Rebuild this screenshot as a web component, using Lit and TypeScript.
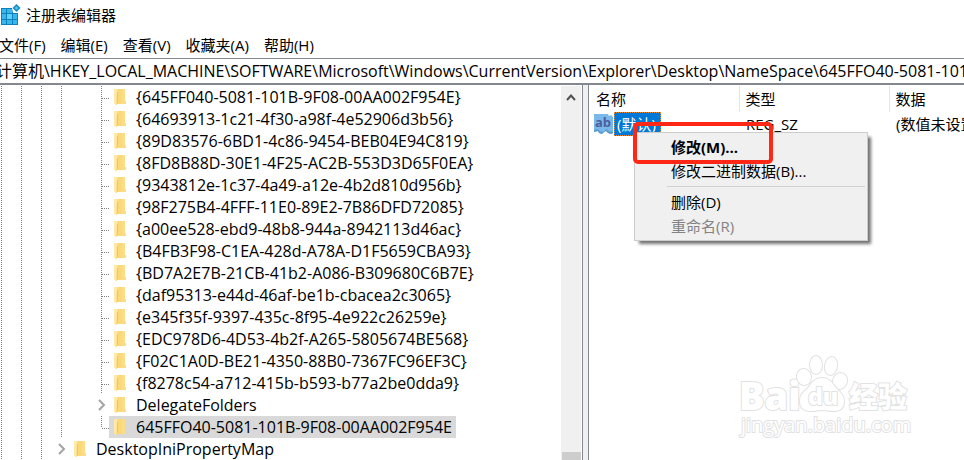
import { LitElement, html, css, svg } from "lit";
import { customElement } from "lit/decorators.js";
import { classMap } from "lit/directives/class-map.js";

interface TreeNode {
  name: string;
  depth: number;
  expandable?: boolean;
  selected?: boolean;
  last?: boolean;
}

const KEYS = [
  "{645FF040-5081-101B-9F08-00AA002F954E}",
  "{64693913-1c21-4f30-a98f-4e52906d3b56}",
  "{89D83576-6BD1-4c86-9454-BEB04E94C819}",
  "{8FD8B88D-30E1-4F25-AC2B-553D3D65F0EA}",
  "{9343812e-1c37-4a49-a12e-4b2d810d956b}",
  "{98F275B4-4FFF-11E0-89E2-7B86DFD72085}",
  "{a00ee528-ebd9-48b8-944a-8942113d46ac}",
  "{B4FB3F98-C1EA-428d-A78A-D1F5659CBA93}",
  "{BD7A2E7B-21CB-41b2-A086-B309680C6B7E}",
  "{daf95313-e44d-46af-be1b-cbacea2c3065}",
  "{e345f35f-9397-435c-8f95-4e922c26259e}",
  "{EDC978D6-4D53-4b2f-A265-5805674BE568}",
  "{F02C1A0D-BE21-4350-88B0-7367FC96EF3C}",
  "{f8278c54-a712-415b-b593-b77a2be0dda9}",
];

const NODES: TreeNode[] = [
  ...KEYS.map((name) => ({ name, depth: 5 })),
  { name: "DelegateFolders", depth: 5, expandable: true },
  { name: "645FFO40-5081-101B-9F08-00AA002F954E", depth: 5, selected: true, last: true },
  { name: "DesktopIniPropertyMap", depth: 3, expandable: true },
];

const PATH =
  "计算机\\HKEY_LOCAL_MACHINE\\SOFTWARE\\Microsoft\\Windows\\CurrentVersion\\Explorer\\Desktop\\NameSpace\\645FFO40-5081-101B-9F08-00AA002F954E";

const folder = html`<svg class="folder" width="14" height="18" viewBox="0 0 14 18" aria-hidden="true">
  <path d="M4 1h8v12h1v3H4z" fill="#fbd978" />
  <path d="M9 1h3v12h1v3H9z" fill="#fadf8c" opacity=".6" />
  <path d="M1 1h3.500l.5 12-1.500 4.500L1 15.500z" fill="#ffe9a8" />
  <path d="M4 3.500l1 .5v10l-1.500 3.500z" fill="#efc65c" />
</svg>`;

const chevron = html`<svg class="chevron" width="10" height="14" viewBox="0 0 10 14" aria-hidden="true">
  <path d="M2 2l5 5-5 5" fill="none" stroke="#a3a3a3" stroke-width="2" />
</svg>`;

@customElement("registry-tree")
export class RegistryTree extends LitElement {
  static styles = css`
    :host {
      display: flex;
      min-width: 0;
      min-height: 0;
      background: #fff;
      border-right: 1px solid #828790;
      overflow: hidden;
      font-size: 16px;
    }
    .tree {
      flex: 1;
      min-width: 0;
      margin: 0;
      padding: 1px 0 0;
      list-style: none;
      overflow: hidden;
    }
    .row {
      display: flex;
      height: 22px;
      align-items: center;
      white-space: nowrap;
    }
    .guide {
      flex: none;
      width: 20px;
      height: 22px;
    }
    .guide.line {
      background: repeating-linear-gradient(#808080 0 1px, transparent 1px 2px) 1px 0 / 1px 100% no-repeat;
    }
    .joint {
      flex: none;
      display: flex;
      align-items: center;
      width: 9px;
      height: 22px;
      background:
        repeating-linear-gradient(#808080 0 1px, transparent 1px 2px) 1px 0 / 1px 100% no-repeat,
        repeating-linear-gradient(90deg, transparent 0 1px, #808080 1px 2px) 1px 12px / 8px 1px no-repeat;
    }
    .joint.last {
      background:
        repeating-linear-gradient(#808080 0 1px, transparent 1px 2px) 1px 0 / 1px 12px no-repeat,
        repeating-linear-gradient(90deg, transparent 0 1px, #808080 1px 2px) 1px 12px / 8px 1px no-repeat;
    }
    .joint.expandable {
      background: none;
    }
    .chevron {
      flex: none;
      margin-left: -3px;
    }
    .item {
      display: flex;
      align-items: center;
      height: 22px;
      padding: 0 4px;
    }
    .item.selected {
      background: #d9d9d9;
    }
    .folder {
      flex: none;
      margin-right: 9px;
    }
    .scroll {
      flex: none;
      display: flex;
      flex-direction: column;
      align-items: center;
      justify-content: space-between;
      width: 20px;
      margin: 1px 1px 0 0;
      background: #f0f0f0;
    }
    .up {
      display: flex;
      justify-content: center;
      width: 20px;
      padding: 5px 0 0;
      border: 0;
      background: none;
    }
    .thumb {
      width: 19px;
      height: 8px;
      background: #cdcdcd;
    }
  `;

  private row(n: TreeNode) {
    const guides = Array.from({ length: n.depth }, (_, i) => i);
    return html`<li class="row" role="treeitem" aria-selected=${n.selected ? "true" : "false"}>
      ${guides.map((i) => html`<span class=${classMap({ guide: true, line: i < 4 })}></span>`)}
      <span class=${classMap({ joint: true, last: !!n.last, expandable: !!n.expandable })}
        >${n.expandable ? chevron : ""}</span
      >
      <span class=${classMap({ item: true, selected: !!n.selected })}>${folder}<span>${n.name}</span></span>
    </li>`;
  }

  render() {
    return html`
      <ul class="tree" role="tree">
        ${NODES.map((n) => this.row(n))}
      </ul>
      <div class="scroll">
        <button class="up" aria-label="Scroll up">
          <svg width="12" height="12" viewBox="0 0 12 12">
            <path d="M2 9l4-4.500L10 9" fill="none" stroke="#505050" stroke-width="2" />
          </svg>
        </button>
        <div class="thumb"></div>
      </div>
    `;
  }
}

@customElement("value-list")
export class ValueList extends LitElement {
  static styles = css`
    :host {
      display: block;
      position: relative;
      min-width: 0;
      background: #fff;
      border-left: 1px solid #828790;
      padding-top: 1px;
    }
    .clip {
      overflow: hidden;
    }
    .values {
      width: 100%;
      border-collapse: collapse;
      table-layout: fixed;
      white-space: nowrap;
    }
    .col {
      width: 150px;
    }
    th {
      height: 26px;
      padding: 0 0 0 6px;
      border-right: 1px solid #e5e5e5;
      font-weight: 400;
      text-align: left;
      box-sizing: border-box;
    }
    th:last-child {
      border-right: 0;
    }
    th:first-child {
      padding-left: 7px;
    }
    td {
      height: 24px;
      padding: 0 0 0 7px;
    }
    .name {
      padding-left: 5px;
    }
    .entry {
      display: flex;
      align-items: center;
    }
    .label {
      height: 24px;
      line-height: 24px;
      padding: 0 5px 0 3px;
      box-sizing: border-box;
      background: #0078d7;
      color: #fff;
      outline: 1px dotted #e08a3c;
      outline-offset: -1px;
    }
    .menu {
      position: absolute;
      left: 45px;
      top: 47px;
      width: 234px;
      box-sizing: border-box;
      padding: 2px;
      border: 1px solid #ccc;
      background: #f0f0f0;
      box-shadow: 4px 4px 3px -1px rgba(0, 0, 0, 0.55);
    }
    .cmd {
      display: block;
      width: 100%;
      height: 24px;
      padding: 0 0 0 34px;
      border: 0;
      background: none;
      color: #000;
      font: inherit;
      text-align: left;
      white-space: nowrap;
    }
    .cmd.default {
      font-weight: 700;
    }
    .cmd:disabled {
      color: #838383;
    }
    .sep {
      height: 1px;
      margin: 3px 0 3px 30px;
      border: 0;
      background: #d2d2d2;
    }
    .mark {
      position: absolute;
      left: 44px;
      top: 37px;
      width: 140px;
      height: 42px;
      box-sizing: border-box;
      border: 4px solid #ff2716;
      border-radius: 5px;
      pointer-events: none;
    }
    .ab {
      font: 700 13px/1 "Open Sans", sans-serif;
    }
  `;

  render() {
    return html`
      <div class="clip">
        <table class="values">
          <colgroup>
            <col class="col" />
            <col class="col" />
            <col />
          </colgroup>
          <thead>
            <tr>
              <th>名称</th>
              <th>类型</th>
              <th>数据</th>
            </tr>
          </thead>
          <tbody>
            <tr>
              <td class="name">
                <span class="entry">
                  <svg width="20" height="20" viewBox="0 0 20 20" aria-hidden="true">
                    <path
                      d="M0 0h14l1 2 2-1 2 2v16l-2 1-3-1-2-2-2 1-2 2-3-1-1-2-4 1z"
                      fill="#7ab8ea"
                    />
                    <path d="M0 16l4-1 2 2 3 1 2-2 2-1 2 2 4 1v1l-2 1-3-1-2-2-2 1-2 2-3-1-1-2-4 1z" fill="#5d9dd0" />
                    <text x="1" y="13" class="ab" fill="#4c5f9c">ab</text>
                  </svg>
                  <span class="label">(默认)</span>
                </span>
              </td>
              <td>REG_SZ</td>
              <td>(数值未设置)</td>
            </tr>
          </tbody>
        </table>
      </div>
      <div class="menu" role="menu">
        <button class="cmd default" role="menuitem">修改(M)...</button>
        <button class="cmd" role="menuitem">修改二进制数据(B)...</button>
        <hr class="sep" />
        <button class="cmd" role="menuitem">删除(D)</button>
        <button class="cmd" role="menuitem" disabled>重命名(R)</button>
      </div>
      <div class="mark"></div>
    `;
  }
}

@customElement("baidu-watermark")
export class BaiduWatermark extends LitElement {
  static styles = css`
    :host {
      display: block;
      pointer-events: none;
    }
    .art {
      display: block;
      overflow: visible;
    }
    .ink {
      fill: #fff;
      stroke: #e2e2e2;
      stroke-width: 2px;
      paint-order: stroke;
    }
    .bold {
      font-family: "Open Sans", "Noto Sans CJK SC", sans-serif;
      font-weight: 800;
    }
    .url {
      font-family: "Open Sans", sans-serif;
      font-size: 20px;
    }
  `;

  render() {
    const toes = [
      [65, 21, 7, 8, -8],
      [77, 9, 6, 9, 0],
      [92, 10, 6, 9, 10],
      [101, 25, 7, 8, 20],
    ];
    return html`<svg class="art" width="176" height="84" viewBox="0 0 176 84">
      <text class="ink bold" x="0" y="54" font-size="38">Bai</text>
      ${toes.map(
        ([x, y, rx, ry, a]) =>
          svg`<ellipse class="ink" cx=${x} cy=${y} rx=${rx} ry=${ry} transform="rotate(${a} ${x} ${y})" />`
      )}
      <path
        class="ink"
        d="M83 22c-8 0-10 5-14 10-4 4-8 6-8 13 0 8 5 10 11 10 5 0 7-1 11-1s7 1 12 1c6 0 10-3 10-10 0-6-4-9-8-13-4-5-6-10-14-10z"
      />
      <text class="ink bold" x="69" y="49" font-size="23">du</text>
      <text class="ink bold" x="110" y="52" font-size="29">经验</text>
      <text class="ink url" x="2" y="76">jingyan.baidu.com</text>
    </svg>`;
  }
}

@customElement("app-root")
export class AppRoot extends LitElement {
  static styles = css`
    :host {
      display: flex;
      flex-direction: column;
      position: relative;
      height: 100vh;
      overflow: hidden;
      background: #fff;
      color: #000;
      font: 15px/22px "Open Sans", "Noto Sans CJK SC", sans-serif;
    }
    .title {
      display: flex;
      align-items: center;
      height: 30px;
      gap: 5px;
      padding-left: 1px;
    }
    .menubar {
      display: flex;
      align-items: center;
      gap: 15px;
      height: 28px;
      margin-left: -1px;
      padding-top: 2px;
      box-sizing: border-box;
    }
    .top {
      padding: 0;
      border: 0;
      background: none;
      color: inherit;
      font: inherit;
      white-space: nowrap;
    }
    .address {
      flex: none;
      width: 100%;
      height: 27px;
      box-sizing: border-box;
      padding: 0 0 2px;
      border: solid #828790;
      border-width: 1px 0 2px;
      background: #fff;
      color: inherit;
      font: inherit;
      font-size: 16px;
      text-indent: -4px;
      outline: 0;
    }
    .split {
      flex: 1;
      display: grid;
      grid-template-columns: 583fr 5px 376fr;
      grid-template-rows: minmax(0, 1fr);
      min-height: 0;
      background: #f0f0f0;
    }
    .watermark {
      position: absolute;
      right: 49px;
      bottom: 20px;
    }
  `;

  render() {
    return html`
      <header class="title">
        <svg width="20" height="22" viewBox="0 0 20 22" aria-hidden="true">
          <rect x="0" y="4" width="17" height="17" fill="#0e80bd" />
          <g fill="#37b7ec">
            <rect x="1" y="5" width="4" height="4" />
            <rect x="6" y="5" width="5" height="4" />
            <rect x="1" y="10" width="4" height="5" />
            <rect x="6" y="10" width="5" height="5" fill="#5fd0f7" />
            <rect x="12" y="10" width="4" height="5" />
            <rect x="1" y="16" width="4" height="4" />
            <rect x="6" y="16" width="5" height="4" />
            <rect x="12" y="16" width="4" height="4" />
          </g>
          <path d="M11 4h6v5h-5z" fill="#fff" />
          <path d="M15.500 0l4 4-4 4-4-4z" fill="#1588c4" />
          <path d="M15.500 2l2 2-2 2-2-2z" fill="#4cc3f1" />
        </svg>
        <span>注册表编辑器</span>
      </header>
      <nav class="menubar">
        ${["文件(F)", "编辑(E)", "查看(V)", "收藏夹(A)", "帮助(H)"].map(
          (t) => html`<button class="top">${t}</button>`
        )}
      </nav>
      <input class="address" aria-label="Address" .value=${PATH} />
      <main class="split">
        <registry-tree></registry-tree>
        <span></span>
        <value-list></value-list>
      </main>
      <baidu-watermark class="watermark"></baidu-watermark>
    `;
  }
}
